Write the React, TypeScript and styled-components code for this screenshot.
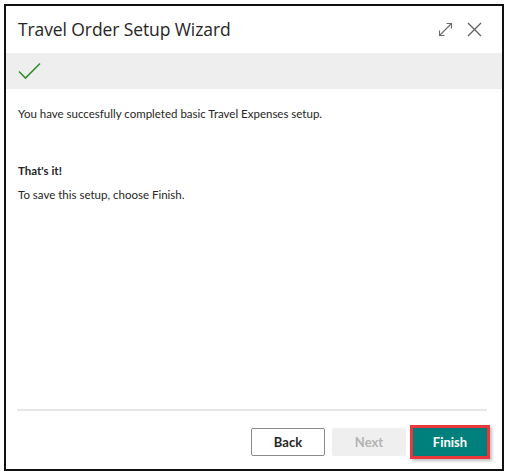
import styled, { createGlobalStyle } from "styled-components";

const GlobalStyle = createGlobalStyle`
  html, body {
    margin: 0;
    padding: 0;
    background: #ffffff;
  }

  body {
    font-family: "Open Sans", "Noto Sans", "Liberation Sans", sans-serif;
    color: #212121;
  }
`;

// ====================
// Wizard dialog
// ====================
export default function App() {
  return (
    <>
      <GlobalStyle />
      <Dialog>
        <Header>
          <Title>Travel Order Setup Wizard</Title>
          <HeaderActions>
            <IconButton aria-label="Expand">
              <svg width="15" height="15" viewBox="0 0 15 15" fill="none">
                <path
                  d="M1.5 13.5 L13.5 1.5 M8.5 1.5 H13.5 V6.5 M1.5 8.5 V13.5 H6.5"
                  stroke="#6b6b6b"
                  strokeWidth="1.1"
                />
              </svg>
            </IconButton>
            <IconButton aria-label="Close">
              <svg width="15" height="15" viewBox="0 0 15 15" fill="none">
                <path
                  d="M1 1 L14 14 M14 1 L1 14"
                  stroke="#5f5f5f"
                  strokeWidth="1.3"
                />
              </svg>
            </IconButton>
          </HeaderActions>
        </Header>

        <StatusBand>
          <svg width="23" height="18" viewBox="0 0 23 18" fill="none">
            <path
              d="M1 9.5 L7.5 16 L22 1.5"
              stroke="#2f8f2f"
              strokeWidth="1.6"
            />
          </svg>
        </StatusBand>

        <Content>
          <Paragraph>
            You have succesfully completed basic Travel Expenses setup.
          </Paragraph>
          <Section>
            <Paragraph $bold>That's it!</Paragraph>
            <Paragraph>To save this setup, choose Finish.</Paragraph>
          </Section>
        </Content>

        <Footer>
          <Button $variant="default">Back</Button>
          <Button $variant="disabled" disabled>
            Next
          </Button>
          <Highlight>
            <Button $variant="primary">Finish</Button>
          </Highlight>
        </Footer>
      </Dialog>
    </>
  );
}

const Dialog = styled.div`
  box-sizing: border-box;
  width: 500px;
  height: 467px;
  margin: 4px 0 0 4px;

  display: flex;
  flex-direction: column;

  border: 2px solid #111111;
  background: #ffffff;
`;

const Header = styled.div`
  height: 47px;
  box-sizing: border-box;
  padding: 0 20px 1px 12px;

  display: flex;
  align-items: center;
  justify-content: space-between;
`;

const Title = styled.h1`
  margin: 0;
  font-size: 17.5px;
  font-weight: 400;
  letter-spacing: -0.1px;
  color: #262626;
`;

const HeaderActions = styled.div`
  display: flex;
  align-items: center;
  gap: 14px;
`;

const IconButton = styled.button`
  display: flex;
  padding: 0;
  border: none;
  background: none;
  cursor: pointer;
`;

const StatusBand = styled.div`
  height: 36px;
  box-sizing: border-box;
  padding: 0 0 0 12px;

  display: flex;
  align-items: center;

  background: #eeeeee;
`;

const Content = styled.div`
  flex: 1;
  padding: 16px 12px 0;

  display: flex;
  flex-direction: column;
  gap: 39px;
`;

const Section = styled.div`
  display: flex;
  flex-direction: column;
  gap: 6px;
`;

const Paragraph = styled.p<{ $bold?: boolean }>`
  margin: 0;
  font-family: "Lato", "Open Sans", sans-serif;
  font-size: 11.5px;
  line-height: 18px;
  font-weight: ${(props) => (props.$bold ? 700 : 400)};
  color: #262626;
`;

const Footer = styled.div`
  margin: 0 15px 0 11px;
  padding: 17px 0 13px;

  display: flex;
  justify-content: flex-end;
  align-items: center;
  gap: 7px;

  border-top: 2px solid #e6e6e6;
`;

const Highlight = styled.div`
  display: flex;
  margin: -3px;
  border: 3px solid #e8383c;
  box-shadow: 2px 2px 3px rgba(0, 0, 0, 0.25);
`;

const Button = styled.button<{ $variant: "default" | "disabled" | "primary" }>`
  box-sizing: border-box;
  width: 74px;
  height: 28px;
  padding: 0;

  font-family: "Lato", "Open Sans", sans-serif;
  font-size: 13px;
  font-weight: 700;

  border-radius: ${(props) => (props.$variant === "primary" ? "0" : "2px")};
  border: 1px solid
    ${(props) =>
      props.$variant === "default"
        ? "#8a8a8a"
        : props.$variant === "disabled"
        ? "#efefef"
        : "#007b78"};

  background: ${(props) =>
    props.$variant === "primary"
      ? "#00807d"
      : props.$variant === "disabled"
      ? "#efefef"
      : "#ffffff"};

  color: ${(props) =>
    props.$variant === "primary"
      ? "#ffffff"
      : props.$variant === "disabled"
      ? "#b3b3b3"
      : "#262626"};

  cursor: ${(props) => (props.$variant === "disabled" ? "default" : "pointer")};
`;
